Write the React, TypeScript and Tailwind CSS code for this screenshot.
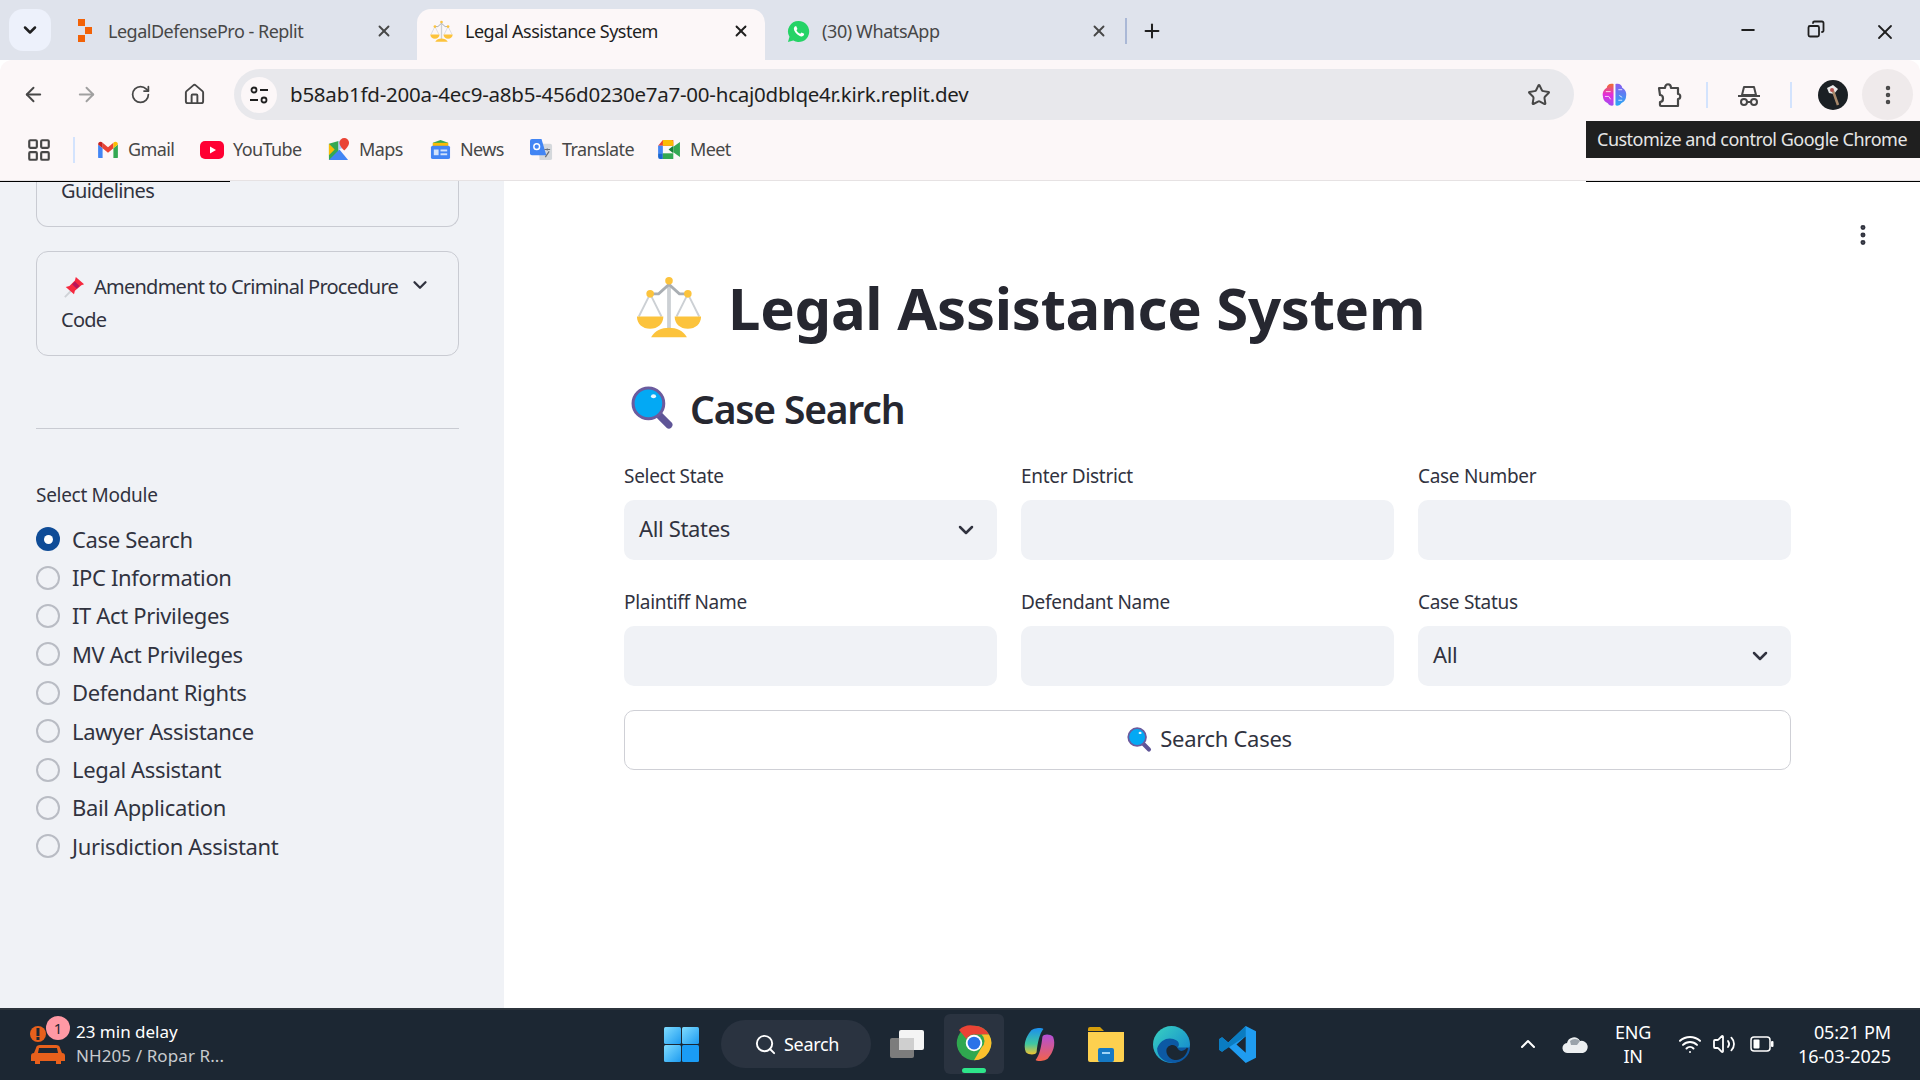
import { ArrowLeft, ArrowRight, ChevronDown, ChevronUp, Copy, EllipsisVertical, Home, LayoutGrid, Minus, Plus, RotateCw, Search, Star, Volume2, Wifi, X } from "lucide-react";

const ui = "font-['Noto_Sans',sans-serif]";

function ScalesIcon({ className }: { className?: string }) {
  return (
    <svg viewBox="0 0 70 70" className={className}>
      <rect x="33" y="6" width="4" height="54" fill="#ccd0d4" />
      <path d="M15 20h9l11-10 11 10h9" fill="none" stroke="#a9aeb3" strokeWidth="3" />
      <path d="M15 20 3 44M15 20l12 24M55 20 43 44M55 20l12 24" fill="none" stroke="#ccd0d4" strokeWidth="2" />
      <circle cx="35" cy="6" r="4" fill="#fcc33c" />
      <circle cx="15" cy="20" r="4" fill="#fcc33c" />
      <circle cx="55" cy="20" r="4" fill="#fcc33c" />
      <path d="M1 44h28c0 8-6 13-14 13S1 52 1 44ZM41 44h28c0 8-6 13-14 13s-14-5-14-13Z" fill="#fcc33c" />
      <path d="M16 66c4-7 11-10 19-10s15 3 19 10Z" fill="#fcc33c" />
    </svg>
  );
}

function LensIcon({ className }: { className?: string }) {
  return (
    <svg viewBox="0 0 42 44" className={className}>
      <path d="M27 28l10 10" stroke="#5f5597" strokeWidth="7" strokeLinecap="round" />
      <circle cx="17" cy="17" r="15" fill="#03a9f4" stroke="#6b5b9e" strokeWidth="3" />
      <ellipse cx="22" cy="10" rx="2.5" ry="2" fill="#e6f7ff" />
    </svg>
  );
}

function PinIcon() {
  return (
    <svg viewBox="0 0 24 24" className="w-[22px] h-[22px] shrink-0">
      <path d="M2 23l8-8" stroke="#cfd2d6" strokeWidth="2" />
      <path d="M14 1l9 8-3 1-7 6-1 4-9-8 4-1 6-6Z" fill="#f5293f" />
      <path d="M10 9l5 5 3-3-5-5Z" fill="#b8155a" />
    </svg>
  );
}

function ChromeIcon({ className }: { className?: string }) {
  return (
    <svg viewBox="0 0 48 48" className={className}>
      <circle cx="24" cy="24" r="23" fill="#2fa84f" />
      <path d="M24 1a23 23 0 0 1 20 11.5H24a11.5 11.5 0 0 0-10 6L4 6.500A23 23 0 0 1 24 1Z" fill="#ea4335" />
      <path d="M44 12.500A23 23 0 0 1 24 47l10-17a11.500 11.500 0 0 0 0-17.500Z" fill="#fbc02d" />
      <circle cx="24" cy="24" r="11" fill="#fff" />
      <circle cx="24" cy="24" r="8.500" fill="#2a73e8" />
    </svg>
  );
}

function ReplitIcon() {
  return (
    <svg viewBox="0 0 16 26" className="w-[16px] h-[26px]">
      <path d="M1 1h7v7H1ZM8 9h7v7H8ZM1 17h7v7H1Z" fill="#f26207" />
    </svg>
  );
}

function WhatsAppIcon() {
  return (
    <svg viewBox="0 0 24 24" className="w-[23px] h-[23px]">
      <path d="M12 1a11 11 0 0 0-9.400 16.600L1 23l5.600-1.500A11 11 0 1 0 12 1Z" fill="#25d366" />
      <path d="M8.500 6.500c-.8.600-1.500 1.700-1.300 3 .4 3.200 4 7 7.500 7.600 1.400.2 2.500-.5 3-1.400l.2-1.300-2.800-1.400-1.200 1.400c-1.700-.6-3.200-2.100-4-3.800l1-1.200-1.200-2.900Z" fill="#fff" />
    </svg>
  );
}

function GmailIcon() {
  return (
    <svg viewBox="0 0 24 20" className="w-[22px] h-[18px]">
      <path d="M1 4v14a1 1 0 0 0 1 1h4V8Z" fill="#4285f4" />
      <path d="M23 4v14a1 1 0 0 1-1 1h-4V8Z" fill="#34a853" />
      <path d="M6 8l6 5 6-5V2l-6 5-6-5Z" fill="#ea4335" />
      <path d="M1 4c0-3 3-4 5-2v6Z" fill="#c5221f" />
      <path d="M23 4c0-3-3-4-5-2v6Z" fill="#fbbc04" />
    </svg>
  );
}

function YouTubeIcon() {
  return (
    <svg viewBox="0 0 24 18" className="w-[24px] h-[18px]">
      <rect width="24" height="18" rx="5" fill="#ff0033" />
      <path d="M10 5.500l6 3.500-6 3.500Z" fill="#fff" />
    </svg>
  );
}

function MapsIcon() {
  return (
    <svg viewBox="0 0 24 24" className="w-[23px] h-[23px]">
      <path d="M2 6l10-3v18L2 23Z" fill="#34a853" />
      <path d="M2 23l11-11 9 11Z" fill="#4285f4" />
      <path d="M2 6l6 6-6 6Z" fill="#fbbc04" />
      <path d="M12 3l6-1v8l-6 2Z" fill="#aecbfa" />
      <path d="M18 0a5 5 0 0 0-5 5c0 4 5 8 5 8s5-4 5-8a5 5 0 0 0-5-5Z" fill="#ea4335" />
    </svg>
  );
}

function NewsIcon() {
  return (
    <svg viewBox="0 0 22 22" className="w-[21px] h-[21px]">
      <path d="M3 4l8-3 8 3v6H3Z" fill="#34a853" />
      <path d="M3 4h16v5H3Z" fill="#fbbc04" />
      <rect x="1" y="7" width="20" height="14" rx="2" fill="#4285f4" />
      <rect x="4" y="11" width="5" height="6" fill="#d2e3fc" />
      <rect x="11" y="11" width="7" height="2" fill="#d2e3fc" />
      <rect x="11" y="15" width="7" height="2" fill="#d2e3fc" />
    </svg>
  );
}

function TranslateIcon() {
  return (
    <svg viewBox="0 0 24 24" className="w-[23px] h-[23px]">
      <path d="M9 6h12a2 2 0 0 1 2 2v13a2 2 0 0 1-2 2H10Z" fill="#d5d8dc" />
      <path d="M2 1h10l5 17H2a2 2 0 0 1-2-2V3a2 2 0 0 1 2-2Z" fill="#4285f4" />
      <circle cx="7" cy="9" r="3" fill="none" stroke="#fff" strokeWidth="1.500" />
      <path d="M15 12h6M18 11v2M16 20l4-6" stroke="#6b7078" strokeWidth="1.300" fill="none" />
    </svg>
  );
}

function MeetIcon() {
  return (
    <svg viewBox="0 0 24 20" className="w-[23px] h-[19px]">
      <path d="M5 0h11v6H0Z" fill="#ea4335" />
      <path d="M0 6h5v8H0Z" fill="#4285f4" />
      <path d="M0 14h5v6H2a2 2 0 0 1-2-2Z" fill="#1967d2" />
      <path d="M5 14h11v6H5Z" fill="#34a853" />
      <path d="M5 0h9a2 2 0 0 1 2 2v4H5Z" fill="#fbbc04" />
      <path d="M16 6v8l-5-4Z" fill="#188038" />
      <path d="M16 7l7-5v16l-7-5Z" fill="#34a853" />
    </svg>
  );
}

function BrainIcon() {
  return (
    <svg viewBox="0 0 26 26" className="w-[25px] h-[25px]">
      <defs>
        <linearGradient id="brainL" x1="0" y1="0" x2="0" y2="1">
          <stop offset="0" stopColor="#f0702a" />
          <stop offset="0.5" stopColor="#e22ddb" />
          <stop offset="1" stopColor="#a04df0" />
        </linearGradient>
        <linearGradient id="brainR" x1="0" y1="0" x2="0" y2="1">
          <stop offset="0" stopColor="#8a5cf0" />
          <stop offset="1" stopColor="#27a8f5" />
        </linearGradient>
      </defs>
      <path d="M12 2C8 1 5 3 5 6 2 8 0 11 1 15c0 4 3 6 5 7 2 3 5 3 6 2Z" fill="url(#brainL)" />
      <path d="M14 2c4-1 7 1 7 4 3 2 5 5 4 9 0 4-3 6-5 7-2 3-5 3-6 2Z" fill="url(#brainR)" />
      <path d="M4 10h5M3 15h4l2 3M17 8h4M18 14l3 2M17 19h4" stroke="#fff" strokeWidth="1" fill="none" opacity="0.8" />
    </svg>
  );
}

function PuzzleIcon() {
  return (
    <svg viewBox="0 0 26 26" className="w-[26px] h-[26px]" fill="none" stroke="#474747" strokeWidth="2.200" strokeLinejoin="round">
      <path d="M3 6h6c0-5 6-5 6 0h7v6c3 0 3 5 0 5v7H5c-1 0-1-1-1-1v-3c4 0 4-7 0-7Z" />
    </svg>
  );
}

function SpyIcon() {
  return (
    <svg viewBox="0 0 24 24" className="w-[24px] h-[24px]" fill="none" stroke="#474747" strokeWidth="2">
      <path d="M1 13h22" />
      <path d="M5 12l2-8h10l2 8Z" stroke="#474747" strokeWidth="2" strokeLinejoin="round" />
      <circle cx="7" cy="19" r="3" />
      <circle cx="17" cy="19" r="3" />
      <path d="M10 19h4" />
    </svg>
  );
}

function AvatarIcon() {
  return (
    <svg viewBox="0 0 30 30" className="w-[30px] h-[30px]">
      <circle cx="15" cy="15" r="15" fill="#1b2024" />
      <path d="M9 8l6-3 5 4-4 5-5-1Z" fill="#e8e8e8" />
      <path d="M15 11l5 14" stroke="#a8896b" strokeWidth="2.500" />
      <circle cx="14" cy="10" r="2" fill="#b3524f" />
    </svg>
  );
}

function WindowsLogo() {
  return (
    <svg viewBox="0 0 35 35" className="w-[35px] h-[35px]">
      <defs>
        <linearGradient id="winA" x1="0" y1="0" x2="1" y2="1">
          <stop offset="0" stopColor="#7fdcff" />
          <stop offset="1" stopColor="#1d9bf0" />
        </linearGradient>
      </defs>
      <rect x="0" y="0" width="17" height="17" rx="1.500" fill="url(#winA)" />
      <rect x="18" y="0" width="17" height="17" rx="1.500" fill="url(#winA)" />
      <rect x="0" y="18" width="17" height="17" rx="1.500" fill="url(#winA)" />
      <rect x="18" y="18" width="17" height="17" rx="1.500" fill="#1a9cf5" />
    </svg>
  );
}

function TaskViewIcon() {
  return (
    <svg viewBox="0 0 36 30" className="w-[36px] h-[30px]">
      <rect x="10" y="1" width="25" height="20" rx="2" fill="#f4f4f4" />
      <rect x="1" y="9" width="24" height="20" rx="2" fill="#7c7c7c" />
      <rect x="10" y="9" width="15" height="12" fill="#cfcfcf" />
    </svg>
  );
}

function CopilotIcon() {
  return (
    <svg viewBox="0 0 36 36" className="w-[35px] h-[35px]">
      <defs>
        <linearGradient id="copA" x1="0" y1="0" x2="0" y2="1">
          <stop offset="0" stopColor="#1b8ef0" />
          <stop offset="0.6" stopColor="#40c8a0" />
          <stop offset="1" stopColor="#f2c230" />
        </linearGradient>
        <linearGradient id="copB" x1="0" y1="0" x2="0" y2="1">
          <stop offset="0" stopColor="#b24fd8" />
          <stop offset="1" stopColor="#f2634b" />
        </linearGradient>
      </defs>
      <path d="M9 4c2-3 11-4 13-2-4 5-6 14-7 24-1 3-8 3-11 0-3-8 0-16 5-22Z" fill="url(#copA)" />
      <path d="M27 32c-2 3-11 4-13 2 4-5 6-14 7-24 1-3 8-3 11 0 3 8 0 16-5 22Z" fill="url(#copB)" />
    </svg>
  );
}

function FolderIcon() {
  return (
    <svg viewBox="0 0 36 36" className="w-[36px] h-[36px]">
      <path d="M0 3a2 2 0 0 1 2-2h10l4 4h-16Z" fill="#d69f0c" />
      <path d="M0 6h36v28a2 2 0 0 1-2 2H2a2 2 0 0 1-2-2Z" fill="#fdd04f" />
      <rect x="10" y="22" width="16" height="14" rx="2" fill="#1579c4" />
      <rect x="14" y="26" width="8" height="2" fill="#9fd4f7" />
    </svg>
  );
}

function EdgeIcon() {
  return (
    <svg viewBox="0 0 36 36" className="w-[37px] h-[37px]">
      <defs>
        <linearGradient id="edgeA" x1="0" y1="0" x2="1" y2="1">
          <stop offset="0" stopColor="#39d3c0" />
          <stop offset="1" stopColor="#0f7ed1" />
        </linearGradient>
      </defs>
      <circle cx="18" cy="18" r="18" fill="url(#edgeA)" />
      <path d="M4 22c3-10 13-12 19-8 3 2 3 6 0 7h13c0 8-8 15-16 15C11 36 4 30 4 22Z" fill="#0c59a4" />
      <path d="M13 24c0-6 9-8 11-2 2 4 8 2 9-1l1 1c-1 7-7 12-13 11-5-1-8-5-8-9Z" fill="#1b2733" />
    </svg>
  );
}

function VSCodeIcon() {
  return (
    <svg viewBox="0 0 36 36" className="w-[37px] h-[37px]">
      <path d="M26 0l10 5v26l-10 5-17-16-6 5-3-2V13l3-2 6 5Zm0 10-9 8 9 8Z" fill="#1f9cf0" />
      <path d="M26 0 9 16l-6-5-3 2v10l3 2L26 10Z" fill="#0a7cc1" />
    </svg>
  );
}

function TrafficIcon() {
  return (
    <svg viewBox="0 0 36 44" className="w-[36px] h-[44px]">
      <circle cx="8" cy="12" r="8" fill="#e8601c" />
      <rect x="6.500" y="6" width="3" height="8" fill="#1c2733" />
      <rect x="6.500" y="15" width="3" height="3" fill="#1c2733" />
      <path d="M6 26c0-2 2-3 4-3h16c2 0 4 1 4 3l2 5c2 0 3 1 3 3v5h-4v3h-5v-3H10v3H5v-3H1v-5c0-2 1-3 3-3Z" fill="#e8601c" />
      <path d="M9 26h18l1 5H8Z" fill="#1c2733" />
    </svg>
  );
}

function CloudIcon() {
  return (
    <svg viewBox="0 0 26 20" className="w-[26px] h-[20px]">
      <path d="M6 19a5 5 0 0 1-1-10 7 7 0 0 1 13-2 6 6 0 0 1 3 12Z" fill="#eceff1" />
      <path d="M8 7a7 7 0 0 1 10 0l-3 4H9Z" fill="#9aa3ab" />
    </svg>
  );
}

function BatteryIcon() {
  return (
    <svg viewBox="0 0 24 16" className="w-[24px] h-[16px]">
      <rect x="1" y="1" width="19" height="14" rx="3" fill="none" stroke="#fff" strokeWidth="1.500" />
      <rect x="3.500" y="3.500" width="6" height="9" rx="1" fill="#fff" />
      <rect x="21" y="5" width="2.500" height="6" rx="1" fill="#fff" />
    </svg>
  );
}

function Field({ label, children }: { label: string; children?: React.ReactNode }) {
  return (
    <div className="flex flex-col">
      <div className="h-[25px] text-[19px] leading-[25px] text-[#31333f] tracking-[-0.3px] mb-[11px]">{label}</div>
      <div className="h-[60px] rounded-[10px] bg-[#f0f2f6] flex items-center justify-between pl-[15px] pr-[19px] text-[22px] text-[#31333f] tracking-[-0.35px]">
        {children}
      </div>
    </div>
  );
}

const modules = [
  "Case Search",
  "IPC Information",
  "IT Act Privileges",
  "MV Act Privileges",
  "Defendant Rights",
  "Lawyer Assistance",
  "Legal Assistant",
  "Bail Application",
  "Jurisdiction Assistant",
];

const bookmarks = [
  { name: "Gmail", icon: <GmailIcon />, width: "w-[103px]" },
  { name: "YouTube", icon: <YouTubeIcon />, width: "w-[127px]" },
  { name: "Maps", icon: <MapsIcon />, width: "w-[103px]" },
  { name: "News", icon: <NewsIcon />, width: "w-[100px]" },
  { name: "Translate", icon: <TranslateIcon />, width: "w-[128px]" },
  { name: "Meet", icon: <MeetIcon />, width: "w-[90px]" },
];

export default function App() {
  return (
    <div className={`relative w-[1920px] h-[1080px] overflow-hidden flex flex-col bg-white ${ui}`}>
      {/* tab strip */}
      <div className="h-[60px] shrink-0 bg-[#dfe3ec] flex items-end">
        <div className="self-start mt-[9px] ml-[9px] w-[42px] h-[42px] rounded-[14px] bg-[#edf1fb] flex items-center justify-center">
          <ChevronDown size={20} strokeWidth={3} className="text-[#1f1f1f]" />
        </div>
        <div className="ml-[9px] w-[355px] h-[51px] pb-[7px] flex items-center text-[#474747]">
          <div className="ml-[17px] w-[31px] flex"><ReplitIcon /></div>
          <span className="text-[18px] tracking-[-0.5px]">LegalDefensePro - Replit</span>
          <X size={18} strokeWidth={2.5} className="ml-auto mr-[22px]" />
        </div>
        <div className="ml-[2px] w-[348px] h-[51px] pb-[7px] rounded-t-[14px] bg-[#fcf7f8] flex items-center text-[#1f1f1f]">
          <ScalesIcon className="ml-[13px] w-[23px] h-[23px]" />
          <span className="ml-[12px] text-[18px] tracking-[-0.5px]">Legal Assistance System</span>
          <X size={18} strokeWidth={2.5} className="ml-auto mr-[15px]" />
        </div>
        <div className="ml-[22px] w-[338px] h-[51px] pb-[7px] flex items-center text-[#474747]">
          <WhatsAppIcon />
          <span className="ml-[12px] text-[18px] tracking-[-0.4px]">(30) WhatsApp</span>
          <X size={18} strokeWidth={2.5} className="ml-auto mr-[17px]" />
        </div>
        <div className="w-[2px] h-[26px] mb-[16px] bg-[#aab8d6]" />
        <Plus size={22} strokeWidth={2.2} className="ml-[14px] mb-[18px] text-[#1f1f1f]" />
        <div className="ml-auto self-start mt-[20px] flex text-[#1f1f1f]">
          <Minus size={20} strokeWidth={2.4} className="mr-[49px]" />
          <Copy size={18} strokeWidth={2.4} className="mr-[48px] scale-x-[-1]" />
          <X size={24} strokeWidth={1.8} className="mr-[23px]" />
        </div>
      </div>

      {/* toolbar */}
      <div className="h-[60px] shrink-0 bg-[#fcf7f8] rounded-t-[12px] flex items-end">
        <div className="h-[51px] flex items-center w-[234px] text-[#474747]">
          <ArrowLeft size={23} strokeWidth={2} className="ml-[22px]" />
          <ArrowRight size={23} strokeWidth={2} className="ml-[30px] text-[#a0a0a0]" />
          <RotateCw size={21} strokeWidth={2} className="ml-[32px]" />
          <Home size={23} strokeWidth={2} className="ml-[32px]" />
        </div>
        <div className="w-[1340px] h-[51px] rounded-full bg-[#e8e8ec] flex items-center">
          <div className="ml-[7px] w-[36px] h-[36px] rounded-full bg-[#fcf7f8] flex items-center justify-center">
            <svg viewBox="0 0 20 20" className="w-[20px] h-[20px]" fill="none" stroke="#1f1f1f" strokeWidth="1.800">
              <circle cx="5" cy="5" r="2.500" />
              <path d="M11 5h8M1 15h8" />
              <circle cx="15" cy="15" r="2.500" />
            </svg>
          </div>
          <span className="ml-[13px] text-[20.5px] text-[#1f1f1f] tracking-[-0.23px]">b58ab1fd-200a-4ec9-a8b5-456d0230e7a7-00-hcaj0dblqe4r.kirk.replit.dev</span>
          <Star size={24} strokeWidth={2} className="ml-auto mr-[23px] text-[#474747]" />
        </div>
        <div className="h-[51px] flex-1 flex items-center">
          <div className="ml-[28px]"><BrainIcon /></div>
          <div className="ml-[29px]"><PuzzleIcon /></div>
          <div className="ml-[24px] w-[2px] h-[26px] bg-[#d3e3fd]" />
          <div className="ml-[29px]"><SpyIcon /></div>
          <div className="ml-[29px] w-[2px] h-[26px] bg-[#d3e3fd]" />
          <div className="ml-[26px]"><AvatarIcon /></div>
          <div className="ml-[14px] w-[51px] h-[51px] rounded-full bg-[#efeaeb] flex items-center justify-center">
            <EllipsisVertical size={24} strokeWidth={2.5} className="text-[#474747]" />
          </div>
        </div>
      </div>

      {/* bookmarks */}
      <div className="h-[61px] shrink-0 bg-[#fcf7f8] pb-[1px] border-b border-[#e6e2e3] flex items-center text-[#474747]">
        <LayoutGrid size={26} strokeWidth={2} className="ml-[26px]" />
        <div className="ml-[21px] mr-[22px] w-[2px] h-[26px] bg-[#d3e3fd]" />
        {bookmarks.map((b) => (
          <div key={b.name} className={`${b.width} flex items-center gap-[9px]`}>
            {b.icon}
            <span className="text-[18px] tracking-[-0.6px]">{b.name}</span>
          </div>
        ))}
      </div>

      {/* page */}
      <div className="flex-1 min-h-0 flex">
        <aside className="w-[504px] shrink-0 bg-[#f0f2f6] pl-[36px] pr-[45px] flex flex-col text-[#31333f]">
          <div className="h-[46px] rounded-b-[12px] border-x border-b border-[#c9cbd2] pl-[24px] text-[20px] tracking-[-0.6px] leading-[20px]">Guidelines</div>
          <div className="mt-[24px] h-[105px] rounded-[12px] border border-[#c9cbd2] pl-[24px] pr-[20px] pt-[18px] relative text-[20px] tracking-[-0.75px] leading-[33px]">
            <div className="flex items-center gap-[9px] ml-[2px] whitespace-nowrap">
              <PinIcon />
              <span>Amendment to Criminal Procedure</span>
            </div>
            <div>Code</div>
            <ChevronDown size={22} strokeWidth={2.5} className="absolute right-[27px] top-[22px]" />
          </div>
          <div className="mt-[72px] h-px bg-[#c9cbd2]" />
          <div className="mt-[54px] h-[25px] text-[19px] leading-[25px] tracking-[-0.3px]">Select Module</div>
          <div className="mt-[12px] flex flex-col">
            {modules.map((m, i) => (
              <div key={m} className="h-[38.4px] flex items-center gap-[12px] text-[22px] tracking-[-0.35px]">
                {i === 0 ? (
                  <div className="w-[24px] h-[24px] rounded-full bg-[#0f4c97] flex items-center justify-center">
                    <div className="w-[9px] h-[9px] rounded-full bg-white" />
                  </div>
                ) : (
                  <div className="w-[24px] h-[24px] rounded-full border-2 border-[#b9bcc4] bg-[#f0f2f6]" />
                )}
                <span>{m}</span>
              </div>
            ))}
          </div>
        </aside>

        <main className="relative flex-1 min-w-0 pl-[120px] pr-[129px] pt-[82px]">
          <EllipsisVertical size={26} strokeWidth={2.6} className="absolute right-[44px] top-[41px] text-[#31333f]" />
          <div className="flex items-center h-[90px] pl-[12px]">
            <ScalesIcon className="w-[66px] h-[66px]" />
            <h1 className="ml-[26px] text-[58px] font-bold text-[#262730] tracking-[-0.27px] leading-none whitespace-nowrap">Legal Assistance System</h1>
          </div>
          <div className="mt-[30px] flex items-center h-[50px] pl-[7px]">
            <LensIcon className="w-[43px] h-[45px]" />
            <h2 className="ml-[16px] text-[39px] font-semibold text-[#262730] tracking-[-1.2px] leading-none">Case Search</h2>
          </div>
          <div className="mt-[31px] grid grid-cols-3 gap-x-[24px] gap-y-[30px]">
            <Field label="Select State">
              <span className="-mt-[3px]">All States</span>
              <ChevronDown size={24} strokeWidth={2.5} />
            </Field>
            <Field label="Enter District" />
            <Field label="Case Number" />
            <Field label="Plaintiff Name" />
            <Field label="Defendant Name" />
            <Field label="Case Status">
              <span className="-mt-[3px]">All</span>
              <ChevronDown size={24} strokeWidth={2.5} />
            </Field>
          </div>
          <div className="mt-[24px] h-[60px] pl-[4px] rounded-[10px] border border-[#cfd0d6] flex items-center justify-center gap-[8px] text-[22px] text-[#31333f] tracking-[-0.3px]">
            <LensIcon className="w-[25px] h-[26px]" />
            <span className="-mt-[3px]">Search Cases</span>
          </div>
        </main>
      </div>

      {/* taskbar */}
      <div className="h-[72px] shrink-0 bg-[#1c2733] border-t-2 border-[#2c343c] pb-[2px] flex items-center text-white">
        <div className="w-[664px] flex items-center relative">
          <div className="ml-[30px]"><TrafficIcon /></div>
          <div className="ml-[10px] flex flex-col leading-[24px]">
            <span className="text-[17px] tracking-[0px]">23 min delay</span>
            <span className="text-[17px] tracking-[0.1px] text-[#c8cbce]">NH205 / Ropar R...</span>
          </div>
          <div className="absolute left-[46px] -top-[4px] w-[24px] h-[24px] rounded-full bg-[#ff99a4] text-[#1c2733] text-[15px] flex items-center justify-center">1</div>
        </div>
        <WindowsLogo />
        <div className="ml-[22px] w-[150px] h-[48px] rounded-full bg-[#2a3340] flex items-center pl-[33px] gap-[7px]">
          <Search size={23} strokeWidth={2} />
          <span className="text-[18px] tracking-[-0.3px]">Search</span>
        </div>
        <div className="ml-[18px]"><TaskViewIcon /></div>
        <div className="ml-[19px] w-[60px] h-[60px] rounded-[6px] bg-[#2a3340] relative flex items-center justify-center">
          <ChromeIcon className="w-[36px] h-[36px] -mt-[3px]" />
          <div className="absolute bottom-[1px] left-[18px] w-[24px] h-[5px] rounded-full bg-[#2ee58a]" />
        </div>
        <div className="ml-[18px]"><CopilotIcon /></div>
        <div className="ml-[31px]"><FolderIcon /></div>
        <div className="ml-[29px]"><EdgeIcon /></div>
        <div className="ml-[29px]"><VSCodeIcon /></div>
        <div className="ml-auto flex items-center">
          <ChevronUp size={24} strokeWidth={2} />
          <div className="ml-[22px]"><CloudIcon /></div>
          <div className="ml-[25px] w-[40px] flex flex-col items-center text-[18px] leading-[24px] tracking-[-0.3px]">
            <span>ENG</span>
            <span>IN</span>
          </div>
          <Wifi size={24} strokeWidth={2} className="ml-[25px]" />
          <Volume2 size={24} strokeWidth={1.8} className="ml-[10px]" />
          <div className="ml-[14px]"><BatteryIcon /></div>
          <div className="ml-[24px] mr-[29px] flex flex-col items-end text-[18px] leading-[24px] tracking-[-0.1px]">
            <span>05:21 PM</span>
            <span>16-03-2025</span>
          </div>
        </div>
      </div>

      {/* tooltip over the toolbar */}
      <div className="absolute left-[1586px] top-[121px] w-[334px] h-[37px] bg-[#1f1f1f] text-[#e6e6e6] text-[18px] tracking-[-0.5px] flex items-center pl-[11px] whitespace-nowrap">
        Customize and control Google Chrome
      </div>
      <div className="absolute left-[1586px] top-[181px] w-[334px] h-px bg-black" />
      <div className="absolute left-0 top-[181px] w-[230px] h-px bg-black" />
    </div>
  );
}
